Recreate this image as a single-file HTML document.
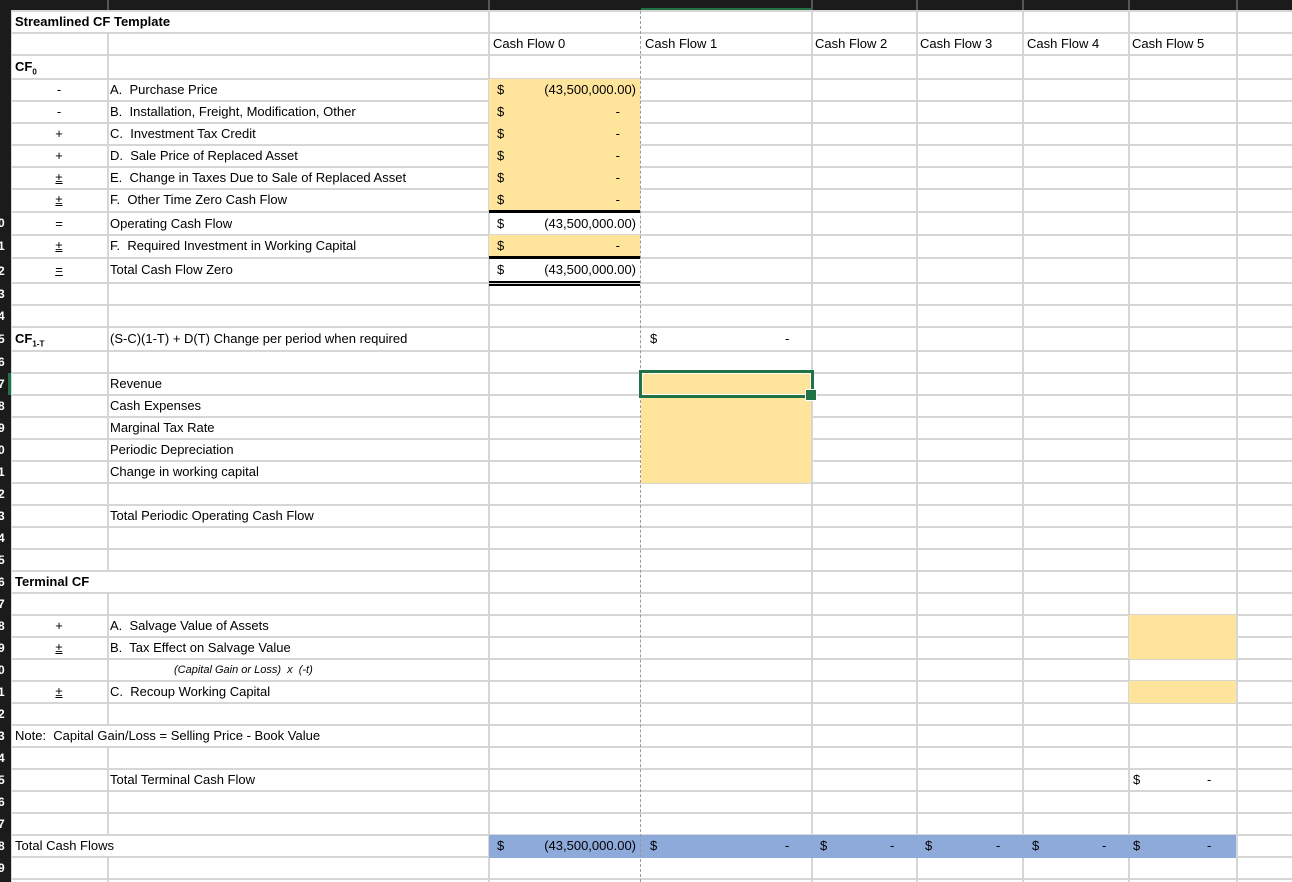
<!DOCTYPE html>
<html><head><meta charset="utf-8"><style>
body{margin:0;width:1292px;height:882px;overflow:hidden;background:#fff;position:relative;font-family:"Liberation Sans",Arial,sans-serif;font-size:13px;color:#000}
div{position:absolute}
.h{left:11px;width:1281px;height:2px;background:#d6d6d6}
.v{top:11px;height:871px;width:2px;background:#d6d6d6}
.t{height:22px;line-height:22px;white-space:nowrap}
.s{width:96px;left:11px;text-align:center}
.u{text-decoration:underline}
.y{background:#ffe59c}
.n{width:140px;text-align:right}
.d{left:497px}
.rn{left:0;width:11px;background:#1b1b1b}
.rh{left:-2px;width:10px;color:#fff;font-weight:bold;font-size:12px;text-align:left}
</style></head><body>
<!-- header strip -->
<div style="left:0;top:0;width:1292px;height:11px;background:#1b1b1b"></div>
<div style="left:641px;top:8px;width:170px;height:3px;background:#217346"></div>
<div style="left:107px;top:0;width:2px;height:11px;background:#555"></div>
<div style="left:488px;top:0;width:2px;height:11px;background:#555"></div>
<div style="left:811px;top:0;width:2px;height:11px;background:#555"></div>
<div style="left:916px;top:0;width:2px;height:11px;background:#555"></div>
<div style="left:1022px;top:0;width:2px;height:11px;background:#555"></div>
<div style="left:1128px;top:0;width:2px;height:11px;background:#555"></div>
<div style="left:1236px;top:0;width:2px;height:11px;background:#555"></div>
<div class="rn" style="top:0;height:882px;overflow:hidden">
<div class="t rh" style="top:212px">0</div><div class="t rh" style="top:235px">1</div><div class="t rh" style="top:260px">2</div><div class="t rh" style="top:283px">3</div><div class="t rh" style="top:305px">4</div><div class="t rh" style="top:328px">5</div><div class="t rh" style="top:351px">6</div><div class="t rh" style="top:373px">7</div><div class="t rh" style="top:395px">8</div><div class="t rh" style="top:417px">9</div><div class="t rh" style="top:439px">0</div><div class="t rh" style="top:461px">1</div><div class="t rh" style="top:483px">2</div><div class="t rh" style="top:505px">3</div><div class="t rh" style="top:527px">4</div><div class="t rh" style="top:549px">5</div><div class="t rh" style="top:571px">6</div><div class="t rh" style="top:593px">7</div><div class="t rh" style="top:615px">8</div><div class="t rh" style="top:637px">9</div><div class="t rh" style="top:659px">0</div><div class="t rh" style="top:681px">1</div><div class="t rh" style="top:703px">2</div><div class="t rh" style="top:725px">3</div><div class="t rh" style="top:747px">4</div><div class="t rh" style="top:769px">5</div><div class="t rh" style="top:791px">6</div><div class="t rh" style="top:813px">7</div><div class="t rh" style="top:835px">8</div><div class="t rh" style="top:857px">9</div>
</div>
<div style="left:8px;top:373px;width:3px;height:22px;background:#217346"></div>
<!-- horizontal gridlines -->
<div class="h" style="top:10px"></div><div class="h" style="top:32px"></div><div class="h" style="top:54px"></div><div class="h" style="top:78px"></div><div class="h" style="top:100px"></div><div class="h" style="top:122px"></div><div class="h" style="top:144px"></div><div class="h" style="top:166px"></div><div class="h" style="top:188px"></div><div class="h" style="top:211px"></div><div class="h" style="top:234px"></div><div class="h" style="top:257px"></div><div class="h" style="top:282px"></div><div class="h" style="top:304px"></div><div class="h" style="top:326px"></div><div class="h" style="top:350px"></div><div class="h" style="top:372px"></div><div class="h" style="top:394px"></div><div class="h" style="top:416px"></div><div class="h" style="top:438px"></div><div class="h" style="top:460px"></div><div class="h" style="top:482px"></div><div class="h" style="top:504px"></div><div class="h" style="top:526px"></div><div class="h" style="top:548px"></div><div class="h" style="top:570px"></div><div class="h" style="top:592px"></div><div class="h" style="top:614px"></div><div class="h" style="top:636px"></div><div class="h" style="top:658px"></div><div class="h" style="top:680px"></div><div class="h" style="top:702px"></div><div class="h" style="top:724px"></div><div class="h" style="top:746px"></div><div class="h" style="top:768px"></div><div class="h" style="top:790px"></div><div class="h" style="top:812px"></div><div class="h" style="top:834px"></div><div class="h" style="top:856px"></div><div class="h" style="top:878px"></div>
<!-- vertical gridlines -->
<div class="v" style="left:11px;width:1px"></div>
<div class="v" style="left:107px"></div><div class="v" style="left:488px"></div><div class="v" style="left:811px"></div><div class="v" style="left:916px"></div><div class="v" style="left:1022px"></div><div class="v" style="left:1128px"></div><div class="v" style="left:1236px"></div>
<div style="left:106px;top:12px;width:4px;height:20px;background:#fff"></div>
<div style="left:106px;top:572px;width:4px;height:20px;background:#fff"></div>
<div style="left:106px;top:726px;width:4px;height:20px;background:#fff"></div>
<div style="left:106px;top:836px;width:4px;height:20px;background:#fff"></div>
<!-- fills -->
<div class="y" style="left:489px;top:79px;width:151px;height:132px"></div>
<div class="y" style="left:489px;top:235px;width:151px;height:22px"></div>
<div class="y" style="left:641px;top:371px;width:170px;height:112px"></div>
<div class="y" style="left:1129px;top:615px;width:107px;height:44px"></div>
<div class="y" style="left:1129px;top:681px;width:107px;height:22px"></div>
<div style="left:489px;top:835px;width:747px;height:23px;background:#8eaadb"></div>
<!-- thick borders -->
<div style="left:489px;top:210px;width:151px;height:3px;background:#000"></div>
<div style="left:489px;top:256px;width:151px;height:3px;background:#000"></div>
<div style="left:489px;top:281px;width:151px;height:1.5px;background:#000"></div>
<div style="left:489px;top:284px;width:151px;height:1.5px;background:#000"></div>
<div style="left:640px;top:11px;width:0;height:871px;border-left:1.5px dashed #999"></div>
<!-- selection -->
<div style="left:639px;top:370px;width:169px;height:22px;border:3px solid #217346;box-shadow:inset 0 0 0 1px #fff"></div>
<div style="left:805px;top:389px;width:10px;height:10px;background:#217346;border:1px solid #fff"></div>
<!-- text -->
<div class="t" style="left:15px;top:11px;font-weight:bold">Streamlined CF Template</div>
<div class="t" style="left:493px;top:33px">Cash Flow 0</div>
<div class="t" style="left:645px;top:33px">Cash Flow 1</div>
<div class="t" style="left:815px;top:33px">Cash Flow 2</div>
<div class="t" style="left:920px;top:33px">Cash Flow 3</div>
<div class="t" style="left:1027px;top:33px">Cash Flow 4</div>
<div class="t" style="left:1132px;top:33px">Cash Flow 5</div>
<div class="t" style="left:15px;top:56px;font-weight:bold">CF<sub style="font-size:8px">0</sub></div>

<div class="t s" style="top:79px">-</div><div class="t" style="left:110px;top:79px">A.&nbsp; Purchase Price</div>
<div class="t s" style="top:101px">-</div><div class="t" style="left:110px;top:101px">B.&nbsp; Installation, Freight, Modification, Other</div>
<div class="t s" style="top:123px">+</div><div class="t" style="left:110px;top:123px">C.&nbsp; Investment Tax Credit</div>
<div class="t s" style="top:145px">+</div><div class="t" style="left:110px;top:145px">D.&nbsp; Sale Price of Replaced Asset</div>
<div class="t s u" style="top:167px">±</div><div class="t" style="left:110px;top:167px">E.&nbsp; Change in Taxes Due to Sale of Replaced Asset</div>
<div class="t s u" style="top:189px">±</div><div class="t" style="left:110px;top:189px">F.&nbsp; Other Time Zero Cash Flow</div>
<div class="t s" style="top:213px">=</div><div class="t" style="left:110px;top:213px">Operating Cash Flow</div>
<div class="t s u" style="top:235px">±</div><div class="t" style="left:110px;top:235px">F.&nbsp; Required Investment in Working Capital</div>
<div class="t s u" style="top:259px">=</div><div class="t" style="left:110px;top:259px">Total Cash Flow Zero</div>

<div class="t d" style="top:79px">$</div><div class="t n" style="left:496px;top:79px">(43,500,000.00)</div>
<div class="t d" style="top:101px">$</div><div class="t n" style="left:480px;top:101px">-</div>
<div class="t d" style="top:123px">$</div><div class="t n" style="left:480px;top:123px">-</div>
<div class="t d" style="top:145px">$</div><div class="t n" style="left:480px;top:145px">-</div>
<div class="t d" style="top:167px">$</div><div class="t n" style="left:480px;top:167px">-</div>
<div class="t d" style="top:189px">$</div><div class="t n" style="left:480px;top:189px">-</div>
<div class="t d" style="top:213px">$</div><div class="t n" style="left:496px;top:213px">(43,500,000.00)</div>
<div class="t d" style="top:235px">$</div><div class="t n" style="left:480px;top:235px">-</div>
<div class="t d" style="top:259px">$</div><div class="t n" style="left:496px;top:259px">(43,500,000.00)</div>

<div class="t" style="left:15px;top:328px;font-weight:bold">CF<sub style="font-size:8px">1-T</sub></div>
<div class="t" style="left:110px;top:328px">(S-C)(1-T) + D(T) Change per period when required</div>
<div class="t" style="left:650px;top:328px">$</div><div class="t" style="left:785px;top:328px">-</div>

<div class="t" style="left:110px;top:373px">Revenue</div>
<div class="t" style="left:110px;top:395px">Cash Expenses</div>
<div class="t" style="left:110px;top:417px">Marginal Tax Rate</div>
<div class="t" style="left:110px;top:439px">Periodic Depreciation</div>
<div class="t" style="left:110px;top:461px">Change in working capital</div>
<div class="t" style="left:110px;top:505px">Total Periodic Operating Cash Flow</div>

<div class="t" style="left:15px;top:571px;font-weight:bold">Terminal CF</div>
<div class="t s" style="top:615px">+</div><div class="t" style="left:110px;top:615px">A.&nbsp; Salvage Value of Assets</div>
<div class="t s u" style="top:637px">±</div><div class="t" style="left:110px;top:637px">B.&nbsp; Tax Effect on Salvage Value</div>
<div class="t" style="left:174px;top:659px;font-style:italic;font-size:11px">(Capital Gain or Loss)&nbsp; x&nbsp; (-t)</div>
<div class="t s u" style="top:681px">±</div><div class="t" style="left:110px;top:681px">C.&nbsp; Recoup Working Capital</div>
<div class="t" style="left:15px;top:725px">Note:&nbsp; Capital Gain/Loss = Selling Price - Book Value</div>
<div class="t" style="left:110px;top:769px">Total Terminal Cash Flow</div>
<div class="t" style="left:1133px;top:769px">$</div><div class="t" style="left:1207px;top:769px">-</div>

<div class="t" style="left:15px;top:835px">Total Cash Flows</div>
<div class="t d" style="top:835px">$</div><div class="t n" style="left:496px;top:835px">(43,500,000.00)</div>
<div class="t" style="left:650px;top:835px">$</div><div class="t" style="left:785px;top:835px">-</div>
<div class="t" style="left:820px;top:835px">$</div><div class="t" style="left:890px;top:835px">-</div>
<div class="t" style="left:925px;top:835px">$</div><div class="t" style="left:996px;top:835px">-</div>
<div class="t" style="left:1032px;top:835px">$</div><div class="t" style="left:1102px;top:835px">-</div>
<div class="t" style="left:1133px;top:835px">$</div><div class="t" style="left:1207px;top:835px">-</div>
</body></html>
